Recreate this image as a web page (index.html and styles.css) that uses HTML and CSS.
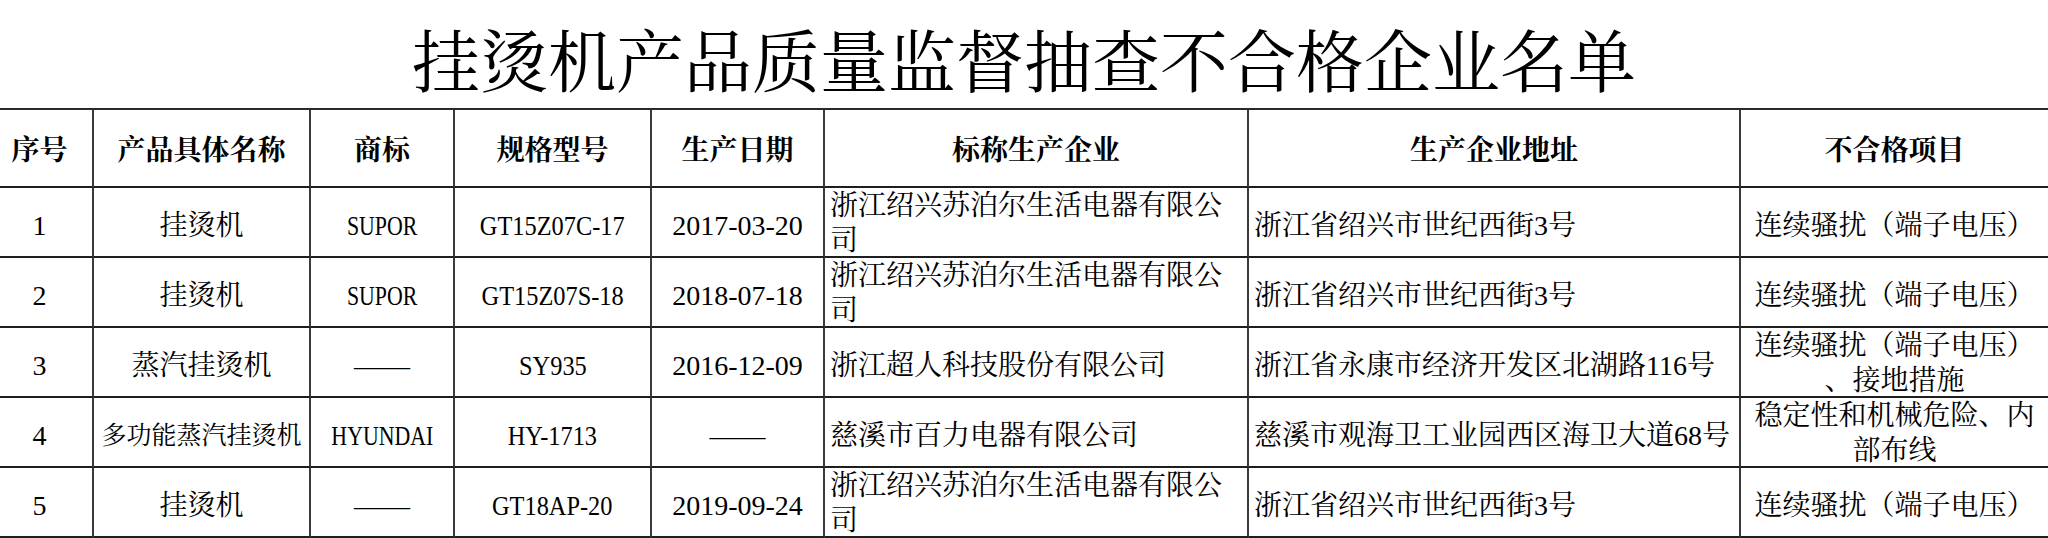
FILE: index.html
```html
<!DOCTYPE html>
<html lang="zh-CN">
<head>
<meta charset="utf-8">
<title>挂烫机产品质量监督抽查不合格企业名单</title>
<link rel="stylesheet" href="styles.css">
</head>
<body>
<div class="title">挂烫机产品质量监督抽查不合格企业名单</div>
<div class="grid">
  <div class="c h"><span>序号</span></div>
  <div class="c h"><span>产品具体名称</span></div>
  <div class="c h"><span>商标</span></div>
  <div class="c h"><span>规格型号</span></div>
  <div class="c h"><span>生产日期</span></div>
  <div class="c h"><span>标称生产企业</span></div>
  <div class="c h"><span>生产企业地址</span></div>
  <div class="c h last"><span>不合格项目</span></div>

  <div class="c"><span>1</span></div>
  <div class="c"><span>挂烫机</span></div>
  <div class="c"><span><span class="cx">SUPOR</span></span></div>
  <div class="c"><span><span class="cm">GT15Z07C-17</span></span></div>
  <div class="c"><span>2017-03-20</span></div>
  <div class="c l w"><span>浙江绍兴苏泊尔生活电器有限公<br>司</span></div>
  <div class="c l"><span>浙江省绍兴市世纪西街3号</span></div>
  <div class="c last"><span>连续骚扰（端子电压）</span></div>

  <div class="c"><span>2</span></div>
  <div class="c"><span>挂烫机</span></div>
  <div class="c"><span><span class="cx">SUPOR</span></span></div>
  <div class="c"><span><span class="cm">GT15Z07S-18</span></span></div>
  <div class="c"><span>2018-07-18</span></div>
  <div class="c l w"><span>浙江绍兴苏泊尔生活电器有限公<br>司</span></div>
  <div class="c l"><span>浙江省绍兴市世纪西街3号</span></div>
  <div class="c last"><span>连续骚扰（端子电压）</span></div>

  <div class="c"><span>3</span></div>
  <div class="c"><span>蒸汽挂烫机</span></div>
  <div class="c"><span>——</span></div>
  <div class="c"><span><span class="cm">SY935</span></span></div>
  <div class="c"><span>2016-12-09</span></div>
  <div class="c l"><span>浙江超人科技股份有限公司</span></div>
  <div class="c l"><span>浙江省永康市经济开发区北湖路116号</span></div>
  <div class="c w last"><span>连续骚扰（端子电压）<br>、接地措施</span></div>

  <div class="c"><span>4</span></div>
  <div class="c sm"><span>多功能蒸汽挂烫机</span></div>
  <div class="c"><span><span class="cx">HYUNDAI</span></span></div>
  <div class="c"><span><span class="cm">HY-1713</span></span></div>
  <div class="c"><span>——</span></div>
  <div class="c l"><span>慈溪市百力电器有限公司</span></div>
  <div class="c l"><span>慈溪市观海卫工业园西区海卫大道68号</span></div>
  <div class="c w last"><span>稳定性和机械危险、内<br>部布线</span></div>

  <div class="c"><span>5</span></div>
  <div class="c"><span>挂烫机</span></div>
  <div class="c"><span>——</span></div>
  <div class="c"><span><span class="cm">GT18AP-20</span></span></div>
  <div class="c"><span>2019-09-24</span></div>
  <div class="c l w"><span>浙江绍兴苏泊尔生活电器有限公<br>司</span></div>
  <div class="c l"><span>浙江省绍兴市世纪西街3号</span></div>
  <div class="c last"><span>连续骚扰（端子电压）</span></div>
</div>
</body>
</html>
```

FILE: styles.css
```css
html, body {
  margin: 0;
  padding: 0;
  background: #fff;
}
body {
  width: 2048px;
  height: 538px;
  overflow: hidden;
  color: #000;
  font-family: "Liberation Serif", "Noto Serif CJK SC", "Noto Sans CJK SC", serif;
}
.title {
  height: 108px;
  box-sizing: border-box;
  padding-top: 8px;
  display: flex;
  align-items: center;
  justify-content: center;
  font-family: "Noto Serif CJK SC", "Noto Sans CJK SC", sans-serif;
  font-size: 68px;
  line-height: 1;
  font-weight: 400;
}
.grid {
  display: grid;
  width: 2061px;
  margin-left: -13px;
  grid-template-columns: 107px 217px 144px 197px 173px 424px 492px 307px;
  grid-template-rows: 78px;
  grid-auto-rows: 70px;
  border-top: 2px solid #2a2a2a;
}
.c {
  box-sizing: border-box;
  border-right: 2px solid #3a3a3a;
  border-bottom: 2px solid #1e1e1e;
  display: flex;
  align-items: center;
  justify-content: center;
  text-align: center;
  font-size: 28px;
  line-height: 37px;
  padding-top: 6px;
  white-space: nowrap;
  min-width: 0;
}
.c.last {
  border-right: none;
}
.h {
  font-weight: 700;
  padding-top: 4px;
}
.l {
  justify-content: flex-start;
  text-align: left;
  padding-left: 5px;
}
.w {
  align-items: flex-start;
  padding-top: 0;
  line-height: 35px;
}
.sm {
  font-size: 25px;
}
.cx {
  display: inline-block;
  transform: scaleX(0.78);
}
.cm {
  display: inline-block;
  transform: scaleX(0.87);
}
```
